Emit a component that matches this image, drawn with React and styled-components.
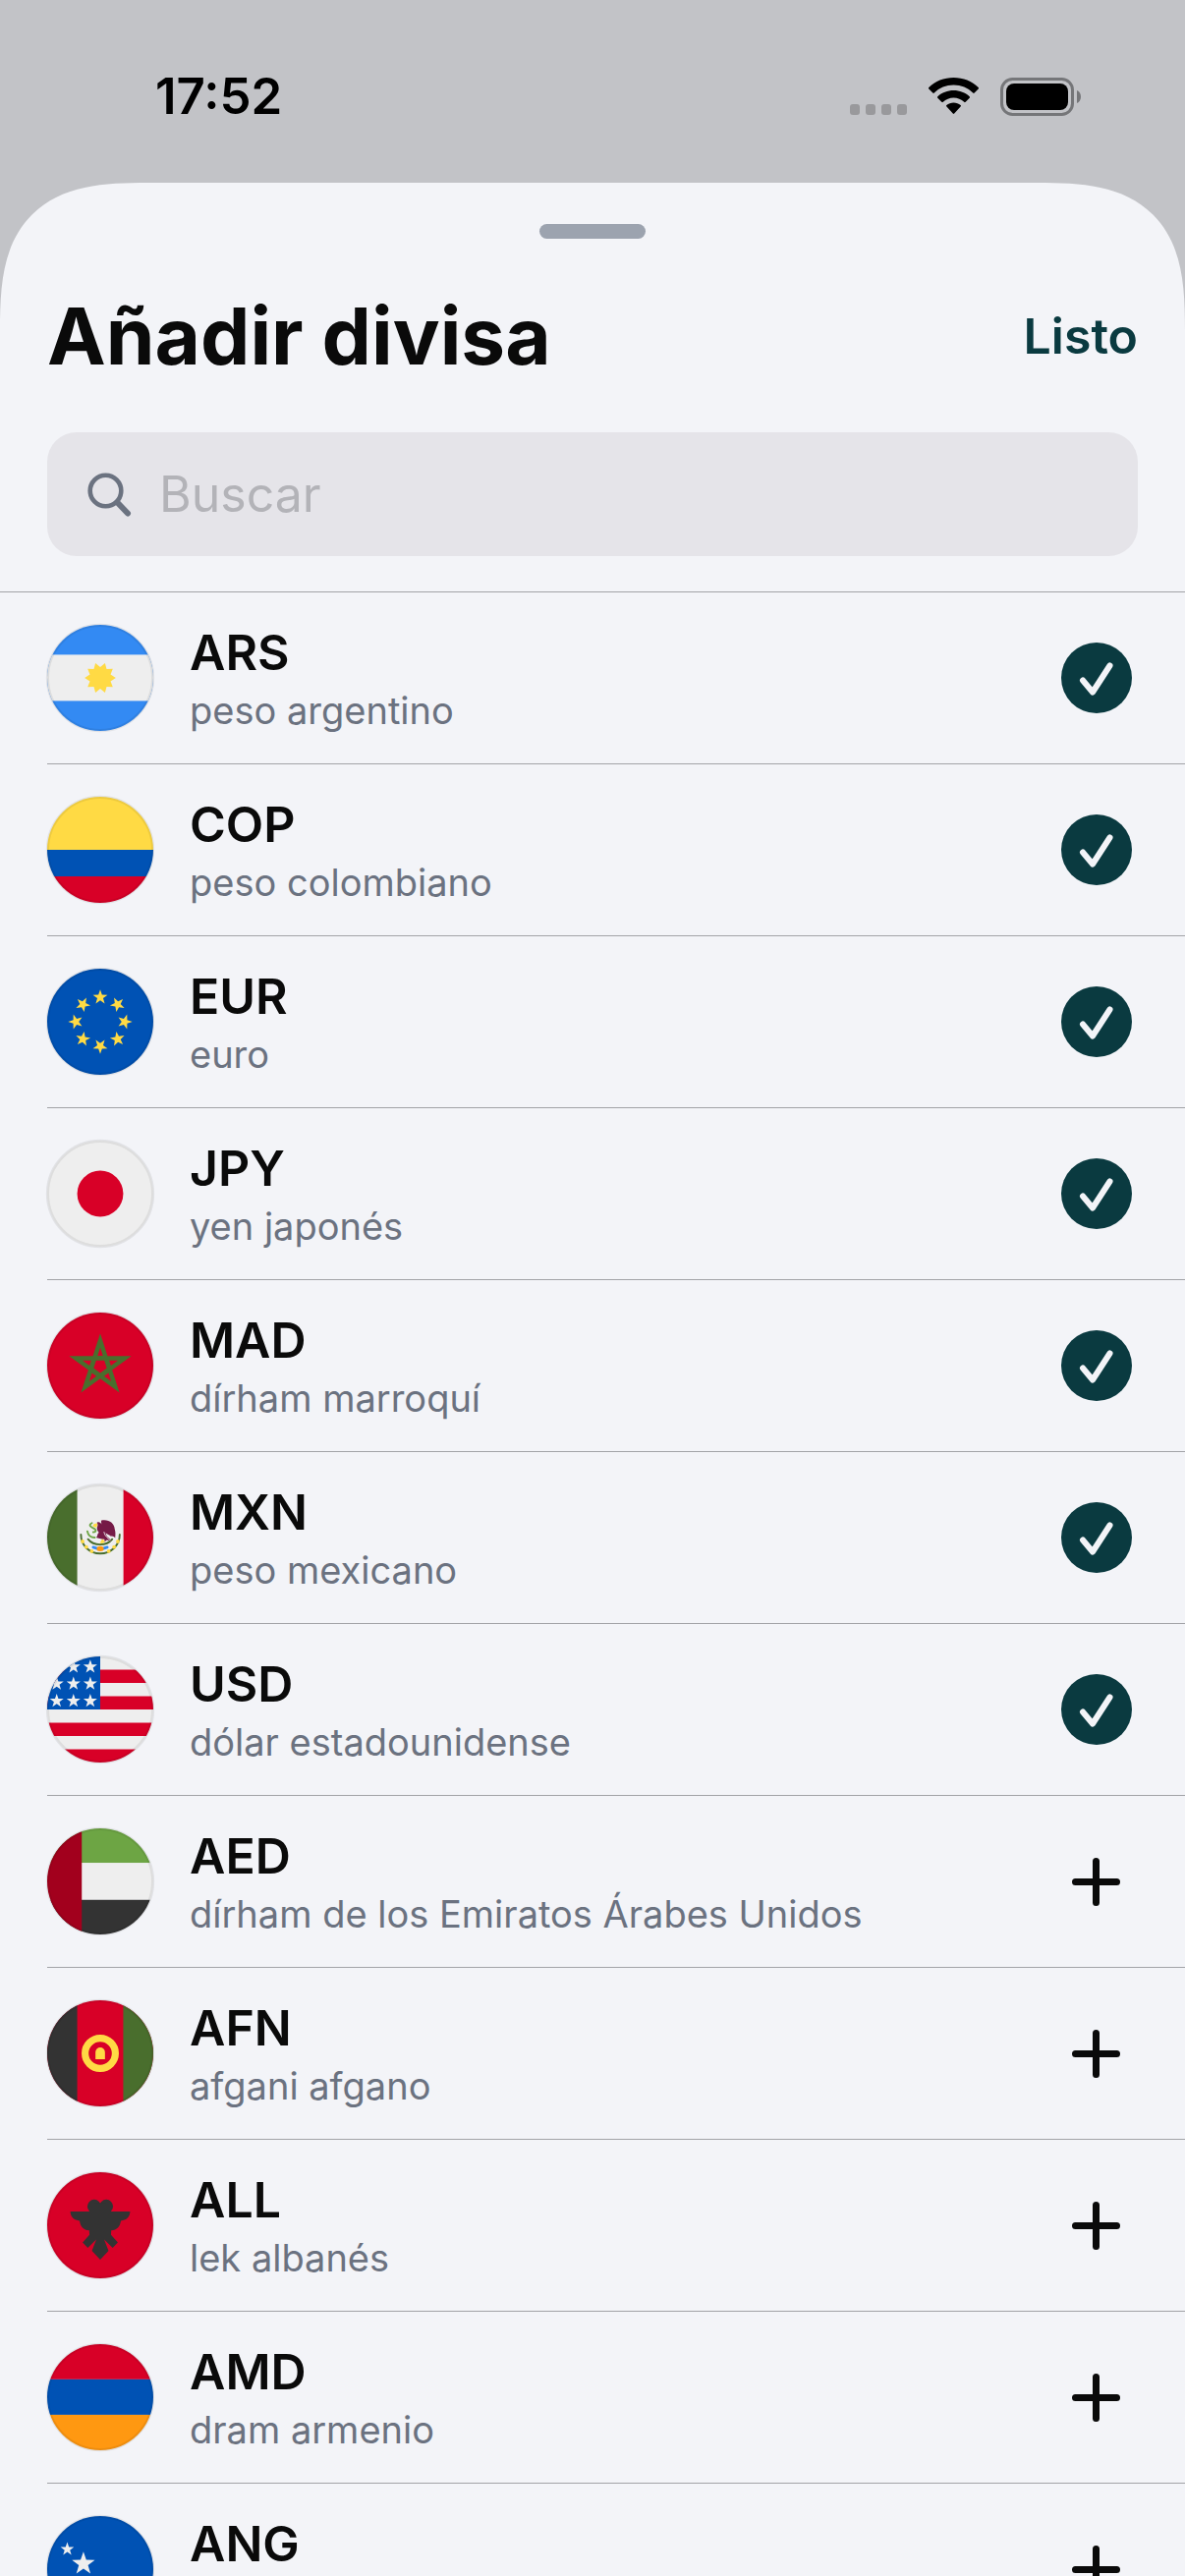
import { useState } from "react";
import styled, { createGlobalStyle } from "styled-components";

const COLORS = {
    red: "#d80027",
    darkRed: "#a2001d",
    blue: "#0052b4",
    sky: "#338af3",
    yellow: "#ffda44",
    orange: "#ff9811",
    white: "#eeeeee",
    green: "#496e2d",
    lime: "#6da544",
    black: "#333333",
    purple: "#751a46",
};

const CURRENCIES = [
    { code: "ARS", name: "peso argentino", added: true },
    { code: "COP", name: "peso colombiano", added: true },
    { code: "EUR", name: "euro", added: true },
    { code: "JPY", name: "yen japonés", added: true },
    { code: "MAD", name: "dírham marroquí", added: true },
    { code: "MXN", name: "peso mexicano", added: true },
    { code: "USD", name: "dólar estadounidense", added: true },
    { code: "AED", name: "dírham de los Emiratos Árabes Unidos", added: false },
    { code: "AFN", name: "afgani afgano", added: false },
    { code: "ALL", name: "lek albanés", added: false },
    { code: "AMD", name: "dram armenio", added: false },
    { code: "ANG", name: "florín antillano", added: false },
];

export default function App() {
    const [search, setSearch] = useState("");
    const [added, setAdded] = useState(CURRENCIES.filter((c) => c.added).map((c) => c.code));

    const toggle = (code) => {
        setAdded(added.includes(code) ? added.filter((c) => c !== code) : [...added, code]);
    };

    const text = search.toLowerCase();
    const list = CURRENCIES.filter((c) => (c.code + " " + c.name).toLowerCase().includes(text));

    return (
        <Screen>
            <GlobalStyle />
            <StatusBar>
                <Time>17:52</Time>
                <StatusIcons>
                    <SignalDots />
                    <WifiIcon />
                    <BatteryIcon />
                </StatusIcons>
            </StatusBar>
            <Sheet>
                <Handle />
                <Header>
                    <Title>Añadir divisa</Title>
                    <DoneButton type="button">Listo</DoneButton>
                </Header>
                <SearchBox>
                    <SearchIcon />
                    <SearchInput
                        type="text"
                        aria-label="Buscar"
                        placeholder="Buscar"
                        value={search}
                        onChange={(e) => setSearch(e.target.value)}
                    />
                </SearchBox>
                <List>
                    {list.map((currency) => (
                        <CurrencyRow
                            key={currency.code}
                            {...currency}
                            isAdded={added.includes(currency.code)}
                            onToggle={() => toggle(currency.code)}
                        />
                    ))}
                </List>
            </Sheet>
        </Screen>
    );
}

function CurrencyRow({ code, name, isAdded, onToggle }) {
    return (
        <Row>
            <Flag code={code} />
            <RowBody>
                <Code>{code}</Code>
                <Name>{name}</Name>
            </RowBody>
            <ToggleButton type="button" aria-label={code} aria-pressed={isAdded} $added={isAdded} onClick={onToggle}>
                {isAdded ? <CheckIcon /> : <PlusIcon />}
            </ToggleButton>
        </Row>
    );
}

/* Icons */

function SignalDots() {
    return (
        <svg width="58" height="38" viewBox="0 0 58 38" fill="#99999c">
            {[0, 16, 32, 48].map((x) => (
                <rect key={x} x={x} y="27" width="10" height="11" rx="3" />
            ))}
        </svg>
    );
}

function WifiIcon() {
    return (
        <svg width="51" height="38" viewBox="0 0 51 38">
            <path d="M25.5 0C35.300 0 44.200 3.700 50.700 9.900a1 1 0 0 1 0 1.500l-4 4.100a1 1 0 0 1-1.500 0C40 10.500 33.100 7.600 25.500 7.600S11 10.500 5.800 15.500a1 1 0 0 1-1.500 0l-4-4.100a1 1 0 0 1 0-1.500C6.800 3.700 15.700 0 25.500 0z" />
            <path d="M25.500 13c6.200 0 11.900 2.300 16.200 6.200a1 1 0 0 1 0 1.500l-4 4a1 1 0 0 1-1.500.1c-2.800-2.600-6.600-4.200-10.700-4.200s-7.900 1.600-10.700 4.200a1 1 0 0 1-1.500-.1l-4-4a1 1 0 0 1 0-1.500C13.600 15.300 19.300 13 25.500 13z" />
            <path d="M25.500 25.500c2.700 0 5.200 1 7.100 2.600a1 1 0 0 1 0 1.500l-6.400 7a1 1 0 0 1-1.400 0l-6.400-7a1 1 0 0 1 0-1.500c1.900-1.600 4.400-2.600 7.100-2.600z" />
        </svg>
    );
}

function BatteryIcon() {
    return (
        <svg width="82" height="39" viewBox="0 0 82 39">
            <rect x="1.500" y="1.500" width="72" height="36" rx="11" fill="none" stroke="#757679" strokeWidth="3" />
            <rect x="6" y="6" width="63" height="27" rx="8" />
            <path d="M78 13c2.600 1.200 4 3.600 4 6.500s-1.400 5.300-4 6.500z" fill="#757679" />
        </svg>
    );
}

function SearchIcon() {
    return (
        <svg width="45" height="45" viewBox="0 0 45 45" fill="none" stroke="#6b7280" strokeLinecap="round">
            <circle cx="18.500" cy="18.500" r="15.800" strokeWidth="4.600" />
            <path d="M30.500 30.500 41 41.500" strokeWidth="6" />
        </svg>
    );
}

function CheckIcon() {
    return (
        <svg width="72" height="72" viewBox="0 0 72 72" fill="none" stroke="#f3f4f8" strokeWidth="6">
            <path d="M22 38.500 32 50.500 49.500 23.500" strokeLinecap="round" strokeLinejoin="round" />
        </svg>
    );
}

function PlusIcon() {
    return (
        <svg width="72" height="72" viewBox="0 0 72 72" stroke="#0a0a0a" strokeWidth="7" strokeLinecap="round">
            <path d="M14.500 36.500h42M35.500 15.500v42" />
        </svg>
    );
}

/* Flags */

function starPoints(cx, cy, r, spikes = 5, ratio = 0.4, rotate = 0) {
    const points = [];
    for (let i = 0; i < spikes * 2; i++) {
        const angle = ((rotate - 90) * Math.PI) / 180 + (i * Math.PI) / spikes;
        const radius = i % 2 ? r * ratio : r;
        points.push(`${(cx + radius * Math.cos(angle)).toFixed(1)},${(cy + radius * Math.sin(angle)).toFixed(1)}`);
    }
    return points.join(" ");
}

const FLAGS = {
    ARS: (
        <>
            <rect width="512" height="512" fill={COLORS.sky} />
            <rect y="144" width="512" height="223" fill={COLORS.white} />
            <polygon points={starPoints(256, 256, 75, 10, 0.7, 90)} fill={COLORS.yellow} />
        </>
    ),
    COP: (
        <>
            <rect width="512" height="256" fill={COLORS.yellow} />
            <rect y="256" width="512" height="128" fill={COLORS.blue} />
            <rect y="384" width="512" height="128" fill={COLORS.red} />
        </>
    ),
    EUR: (
        <>
            <rect width="512" height="512" fill={COLORS.blue} />
            {[0, 45, 90, 135, 180, 225, 270, 315].map((deg) => (
                <polygon
                    key={deg}
                    points={starPoints(256, 138, 37)}
                    transform={`rotate(${deg} 256 256)`}
                    fill={COLORS.yellow}
                />
            ))}
        </>
    ),
    JPY: (
        <>
            <rect width="512" height="512" fill={COLORS.white} />
            <circle cx="256" cy="256" r="111" fill={COLORS.red} />
        </>
    ),
    MAD: (
        <>
            <rect width="512" height="512" fill={COLORS.red} />
            <polygon points={starPoints(256, 259, 158, 5, 0.382)} fill={COLORS.green} />
            {[0, 72, 144, 216, 288].map((deg) => (
                <path
                    key={deg}
                    d="M243 209h26l-13-40z"
                    transform={`rotate(${deg} 256 259)`}
                    fill={COLORS.red}
                />
            ))}
            <path d="M236.400 231h39.200l12.200 37.400-31.800 23.100-31.800-23.100z" fill={COLORS.red} />
        </>
    ),
    MXN: (
        <>
            <rect width="512" height="512" fill={COLORS.white} />
            <rect width="145" height="512" fill={COLORS.green} />
            <rect x="368" width="144" height="512" fill={COLORS.red} />
            <g fill="none" strokeLinecap="round">
                <path d="M163 242c0 52 40 91 93 91s94-39 94-91" stroke={COLORS.green} strokeWidth="9" />
                <path d="M197 264c14 18 36 26 59 26s44-8 58-26" stroke={COLORS.green} strokeWidth="9" />
                <path d="M216 186c-20 10-4 20 8 26 16 8 12 18-2 18M194 226c4 22 14 30 36 30" stroke={COLORS.lime} strokeWidth="9" />
                <path d="M222 303 242 309M290 303 270 309" stroke={COLORS.sky} strokeWidth="13" />
            </g>
            <g fill={COLORS.yellow}>
                <circle cx="171" cy="275" r="9" />
                <circle cx="189" cy="302" r="9" />
                <circle cx="215" cy="322" r="9" />
                <circle cx="341" cy="275" r="9" />
                <circle cx="323" cy="302" r="9" />
                <circle cx="297" cy="322" r="9" />
                <path d="M244 188c-12-2-24 4-24 14l18 6zM254 282l12-20 14 14-14 8z" />
            </g>
            <path
                d="M240 184c10-6 18 0 22 8l-2-18c36-8 64 12 66 42 4 12 4 26 2 42-6-6-12-10-20-8-8-6-18-8-26-16 4 22 20 26 28 38l-22-4-10 8-2-12c-16 0-30-6-40-8 10-8 4-18 14-24-8-10-12-18-8-28 4-8 2-14-2-20z"
                fill={COLORS.purple}
            />
            <path d="M274 228c2 20 18 28 32 44" fill="none" stroke={COLORS.white} strokeWidth="4" />
            <ellipse cx="256" cy="310" rx="17" ry="12" fill={COLORS.orange} />
        </>
    ),
    USD: (
        <>
            <rect width="512" height="512" fill={COLORS.white} />
            <path d="M0 64h512v64H0zM0 192h512v64H0zM0 320h512v64H0zM0 448h512v64H0z" fill={COLORS.red} />
            <rect width="256" height="256" fill={COLORS.blue} />
            {[48, 130, 213].map((y) =>
                [46, 127, 208].map((x) => (
                    <polygon key={x + "-" + y} points={starPoints(x, y + 2, 35)} fill={COLORS.white} />
                ))
            )}
        </>
    ),
    AED: (
        <>
            <rect width="512" height="167" fill={COLORS.lime} />
            <rect y="167" width="512" height="178" fill={COLORS.white} />
            <rect y="345" width="512" height="167" fill={COLORS.black} />
            <rect width="167" height="512" fill={COLORS.darkRed} />
        </>
    ),
    AFN: (
        <>
            <rect width="512" height="512" fill={COLORS.red} />
            <rect width="145" height="512" fill={COLORS.black} />
            <rect x="367" width="145" height="512" fill={COLORS.green} />
            <circle cx="256" cy="256" r="73" fill="none" stroke={COLORS.yellow} strokeWidth="34" />
            <path d="M233 284v-33a23 23 0 0 1 46 0v33z" fill={COLORS.yellow} />
        </>
    ),
    ALL: (
        <>
            <rect width="512" height="512" fill={COLORS.red} />
            <g fill={COLORS.black}>
                <circle cx="227" cy="165" r="33" />
                <circle cx="285" cy="165" r="33" />
                <path d="M227 150h58v45h-58z" />
                <path d="M112 190H400c0 24-16 42-40 43-3 0-4 2-5 4-4 26-18 42-46 44l-1 21 33 37-25 26-41-40 21 54-40 43-40-43 21-54-41 40-25-26 33-37-1-21c-28-2-42-18-46-44-1-2-2-4-5-4-24-1-40-19-40-43z" />
            </g>
        </>
    ),
    AMD: (
        <>
            <rect width="512" height="170" fill={COLORS.red} />
            <rect y="170" width="512" height="171" fill={COLORS.blue} />
            <rect y="341" width="512" height="171" fill={COLORS.orange} />
        </>
    ),
    ANG: (
        <>
            <rect width="512" height="512" fill={COLORS.blue} />
            <rect y="322" width="512" height="67" fill={COLORS.yellow} />
            <polygon points={starPoints(97, 160, 34)} fill={COLORS.white} />
            <polygon points={starPoints(175, 230, 58)} fill={COLORS.white} />
        </>
    ),
};

function Flag({ code }) {
    return (
        <FlagSvg viewBox="0 0 512 512" aria-hidden="true">
            <clipPath id={"flag-" + code}>
                <circle cx="256" cy="256" r="256" />
            </clipPath>
            <g clipPath={`url(#flag-${code})`}>{FLAGS[code]}</g>
            <circle cx="256" cy="256" r="254" fill="none" stroke="#000" strokeOpacity="0.070" strokeWidth="15" />
        </FlagSvg>
    );
}

const GlobalStyle = createGlobalStyle`
    * {
        box-sizing: border-box;
    }

    body {
        margin: 0;
        background: #c2c3c7;
        color: #0a0a0a;
        font-family: Inter, "Liberation Sans", sans-serif;
    }

    button,
    input {
        margin: 0;
        padding: 0;
        border: 0;
        background: none;
        font-family: inherit;
    }

    svg {
        display: block;
        flex-shrink: 0;
    }
`;

const Screen = styled.div`
    display: flex;
    flex-direction: column;
    height: 100vh;
    overflow: hidden;
`;

const StatusBar = styled.div`
    display: flex;
    justify-content: space-between;
    align-items: center;
    flex-shrink: 0;
    height: 186px;
    padding: 10px 106px 0 158px;
    color: #000;
`;

const Time = styled.span`
    font-size: 51px;
    line-height: 60px;
    font-weight: 600;
`;

const StatusIcons = styled.div`
    display: flex;
    align-items: center;
    gap: 22px;
`;

const Sheet = styled.main`
    display: flex;
    flex-direction: column;
    flex: 1;
    min-height: 0;
    padding-top: 42px;
    background: #f3f4f8;
    border-radius: 112px 112px 0 0;

    @supports (corner-shape: superellipse(1.5)) {
        border-radius: 150px 150px 0 0;
        corner-shape: superellipse(1.5);
    }
`;

const Handle = styled.div`
    flex-shrink: 0;
    align-self: center;
    width: 108px;
    height: 15px;
    border-radius: 8px;
    background: #9ca3af;
`;

const Header = styled.header`
    display: flex;
    justify-content: space-between;
    align-items: center;
    margin: 50px 48px;
`;

const Title = styled.h1`
    margin: 0;
    font-size: 80px;
    line-height: 97px;
    font-weight: 700;
`;

const DoneButton = styled.button`
    color: #0a3a40;
    font-size: 50px;
    line-height: 60px;
    font-weight: 600;
`;

const SearchBox = styled.label`
    display: flex;
    align-items: center;
    flex-shrink: 0;
    gap: 28px;
    height: 126px;
    margin: 0 48px 36px;
    padding: 0 41px;
    border-radius: 30px;
    background: #e5e4e9;
`;

const SearchInput = styled.input`
    flex: 1;
    min-width: 0;
    color: #0a0a0a;
    font-size: 50px;
    line-height: 60px;
    outline: none;

    &::placeholder {
        color: #b3b3b8;
        opacity: 1;
    }
`;

const List = styled.ul`
    flex: 1;
    min-height: 0;
    margin: 0;
    padding: 0;
    overflow-y: auto;
    list-style: none;
    border-top: 1px solid #a2a3a7;
    scrollbar-width: none;
`;

const Row = styled.li`
    display: flex;
    align-items: center;
    gap: 37px;
    height: 175px;
    margin-left: 48px;
    padding-right: 54px;
    border-bottom: 1px solid #a2a3a7;
`;

const FlagSvg = styled.svg`
    width: 108px;
    height: 108px;
    overflow: visible;
`;

const RowBody = styled.div`
    display: flex;
    flex-direction: column;
    flex: 1;
    gap: 5px;
    min-width: 0;
    padding-top: 1px;
`;

const Code = styled.span`
    font-size: 50px;
    line-height: 60px;
    font-weight: 600;
`;

const Name = styled.span`
    color: #6b7280;
    font-size: 38px;
    line-height: 48px;
`;

const ToggleButton = styled.button`
    flex-shrink: 0;
    width: 72px;
    height: 72px;
    border-radius: 50%;
    background: ${({ $added }) => ($added ? "#0a3a40" : "transparent")};
    cursor: pointer;
`;
